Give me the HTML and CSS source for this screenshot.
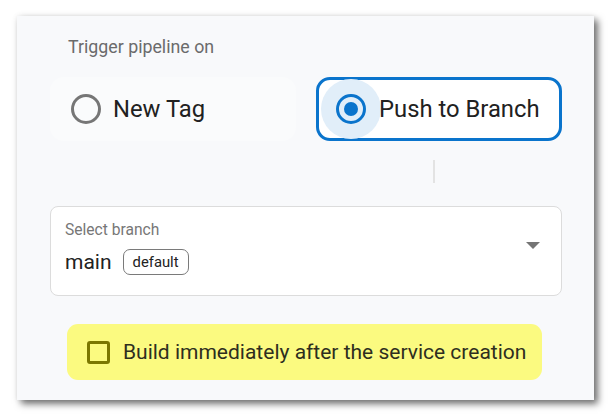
FILE: index.html
```html
<!DOCTYPE html>
<html>
<head>
<meta charset="utf-8">
<link rel="stylesheet" href="styles.css">
</head>
<body>
<div class="card">
  <div class="label">Trigger pipeline on</div>
  <div class="radios">
    <div class="opt">
      <span class="radio"></span>
      <span class="opt-text">New Tag</span>
    </div>
    <div class="opt opt-sel">
      <span class="halo"></span>
      <span class="radio radio-on"><span class="dot"></span></span>
      <span class="opt-text">Push to Branch</span>
    </div>
  </div>
  <div class="divider-row"><span class="divider"></span></div>
  <div class="select">
    <div class="select-main">
      <div class="select-label">Select branch</div>
      <div class="select-value"><span class="val">main</span><span class="chip">default</span></div>
    </div>
    <svg class="arrow" width="14" height="7" viewBox="0 0 14 7"><path d="M0 0H14L7 7Z" fill="#757575"/></svg>
  </div>
  <div class="build">
    <span class="check"></span>
    <span class="build-text">Build immediately after the service creation</span>
  </div>
</div>
</body>
</html>
```
FILE: styles.css
```css
html, body {
  margin: 0;
  padding: 0;
  background: #ffffff;
  font-family: Roboto, "Noto Sans", sans-serif;
}
body {
  height: 418px;
  overflow: hidden;
}
.card {
  box-sizing: border-box;
  margin: 16px 0 0 17px;
  width: 577px;
  height: 384px;
  background: #f8f9fb;
  padding: 20px 32px 0 33px;
  box-shadow: 4px 4px 7px rgba(0,0,0,0.55), 0 0 6px rgba(0,0,0,0.08);
  display: flex;
  flex-direction: column;
}
.label {
  padding-left: 18px;
  font-size: 17.8px;
  line-height: 22px;
  color: #6b6b6b;
}
.radios {
  margin-top: 19px;
  display: flex;
  gap: 20px;
}
.opt {
  position: relative;
  box-sizing: border-box;
  width: 246px;
  height: 64px;
  border: 3px solid transparent;
  border-radius: 14px;
  background: #fafbfc;
  display: flex;
  align-items: center;
  padding-left: 18px;
  gap: 12px;
}
.opt-sel {
  border-color: #0a74cc;
  background: #ffffff;
  padding-left: 17px;
  gap: 13px;
}
.halo {
  position: absolute;
  left: 2px;
  top: -1px;
  width: 60px;
  height: 60px;
  border-radius: 50%;
  background: #e1eef9;
}
.radio {
  position: relative;
  box-sizing: border-box;
  width: 30px;
  height: 30px;
  border: 3px solid #767676;
  border-radius: 50%;
  display: flex;
  align-items: center;
  justify-content: center;
  flex: none;
}
.radio-on {
  border-color: #0a74cc;
}
.dot {
  width: 14px;
  height: 14px;
  border-radius: 50%;
  background: #0a74cc;
}
.opt-text {
  position: relative;
  font-size: 23.8px;
  color: #212121;
  line-height: 28px;
}
.divider-row {
  display: flex;
  padding-left: 383px;
  margin-top: 19px;
}
.divider {
  width: 2px;
  height: 23px;
  background: #e3e3e3;
}
.select {
  margin-top: 23px;
  box-sizing: border-box;
  height: 90px;
  background: #ffffff;
  border: 1px solid #dcdcdc;
  border-radius: 8px;
  display: flex;
  align-items: center;
  padding: 0 21px 0 14px;
}
.select-main {
  flex: 1;
  display: flex;
  flex-direction: column;
  gap: 9px;
  margin-top: -7px;
}
.select-label {
  font-size: 15.6px;
  color: #777777;
  line-height: 20px;
}
.select-value {
  display: flex;
  align-items: center;
  gap: 11px;
}
.val {
  font-size: 21px;
  color: #222222;
  line-height: 26px;
}
.chip {
  box-sizing: border-box;
  height: 26px;
  padding: 0 9px;
  border: 1px solid #7a7a7a;
  border-radius: 7px;
  font-size: 14.8px;
  line-height: 24px;
  color: #222222;
}
.arrow {
  margin-top: -12px;
}
.build {
  margin: 28px 0 0 17px;
  width: 475px;
  height: 56px;
  box-sizing: border-box;
  background: #fbfa80;
  border-radius: 11px;
  display: flex;
  align-items: center;
  padding-left: 20px;
  gap: 13px;
}
.check {
  box-sizing: border-box;
  width: 23px;
  height: 23px;
  border: 3px solid #7b7700;
  border-radius: 3px;
  flex: none;
}
.build-text {
  font-size: 21px;
  color: #2e2e1e;
}
```
